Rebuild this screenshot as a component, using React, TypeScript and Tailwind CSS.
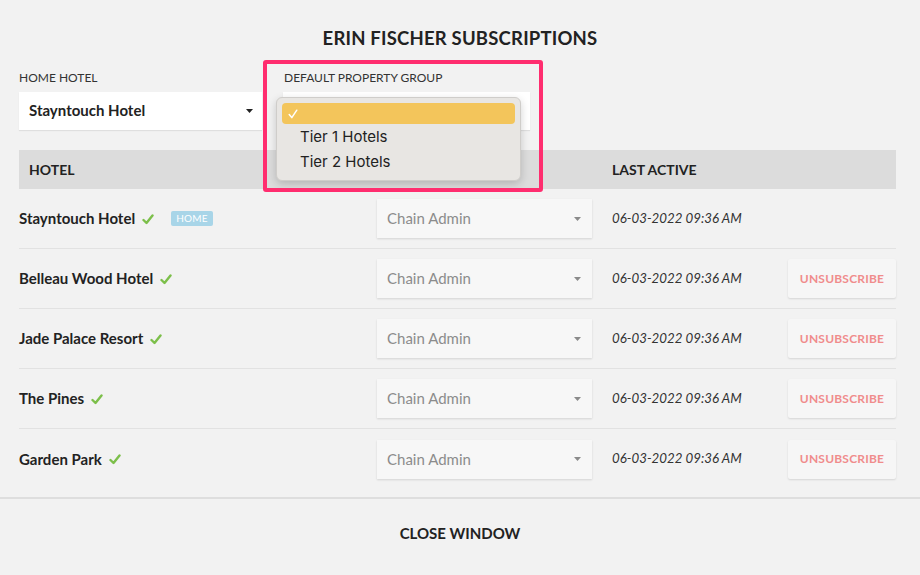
import React from "react";

const rows = [
  { name: "Stayntouch Hotel", home: true },
  { name: "Belleau Wood Hotel" },
  { name: "Jade Palace Resort" },
  { name: "The Pines" },
  { name: "Garden Park" },
];

function Check() {
  return (
    <svg width="12" height="11" viewBox="0 0 12 11" className="ml-[7px] mt-[1px]">
      <path d="M1.5 6 L4.5 9 L10.5 1.5" fill="none" stroke="#7cbf4a" strokeWidth="2.4" strokeLinecap="round" strokeLinejoin="round" />
    </svg>
  );
}

function Caret({ color }: { color: string }) {
  return (
    <svg width="7" height="4" viewBox="0 0 7 4">
      <path d="M0 0 L7 0 L3.5 4 Z" fill={color} />
    </svg>
  );
}

export default function App() {
  return (
    <div
      className="relative w-[920px] h-[575px] bg-[#f2f2f2] text-[#222] overflow-hidden"
      style={{ fontFamily: "Lato, 'Noto Sans', sans-serif" }}
    >
      <div className="pt-[27px] text-center text-[18.5px] leading-[22px] font-bold tracking-[0.2px]">
        ERIN FISCHER SUBSCRIPTIONS
      </div>

      <div className="pl-[19px] pr-[24px]">
        <div className="mt-[21px] flex gap-[21px]">
          <div className="w-[243px]">
            <div className="text-[12px] leading-[16px] text-[#333]">HOME HOTEL</div>
            <div className="mt-[6px] h-[38px] bg-white flex items-center justify-between pl-[10px] pr-[9px] shadow-[0_1px_1px_rgba(0,0,0,0.08)]">
              <span className="text-[15px] font-bold leading-[18px] -mt-[2px]">Stayntouch Hotel</span>
              <Caret color="#222" />
            </div>
          </div>
          <div className="w-[247px]">
            <div className="text-[12px] leading-[16px] text-[#333] pl-[1px]">DEFAULT PROPERTY GROUP</div>
            <div className="mt-[6px] h-[38px] bg-white shadow-[0_1px_1px_rgba(0,0,0,0.08)]"></div>
          </div>
        </div>

        <div className="mt-[20px] h-[39px] bg-[#dcdcdc] grid grid-cols-[358px_215px_196px_108px] items-center text-[14px] font-bold">
          <div className="pl-[10px]">HOTEL</div>
          <div></div>
          <div className="pl-[20px]">LAST ACTIVE</div>
          <div></div>
        </div>

        {rows.map((r, i) => (
          <div
            key={i}
            className={`h-[60px] grid grid-cols-[358px_215px_196px_108px] items-center ${i < rows.length - 1 ? "border-b border-[#e2e2e2]" : ""}`}
          >
            <div className="flex items-center">
              <span className="text-[15px] font-bold">{r.name}</span>
              <Check />
              {r.home && (
                <span className="ml-[17px] h-[15px] px-[5px] rounded-[2px] bg-[#a8d5e8] text-white text-[10px] leading-[15px] tracking-[0.2px]">
                  HOME
                </span>
              )}
            </div>
            <div className="h-[39px] bg-[#f7f7f7] shadow-[0_1px_2px_rgba(0,0,0,0.13)] flex items-center justify-between pl-[10px] pr-[11px]">
              <span className="text-[15px] text-[#8c8c8c]">Chain Admin</span>
              <Caret color="#8a8a8a" />
            </div>
            <div className="pl-[20px] italic text-[13.3px] text-[#333]">06-03-2022 09:36 AM</div>
            <div>
              {!r.home && (
                <div className="h-[39px] bg-[#f6f6f6] shadow-[0_1px_2px_rgba(0,0,0,0.12)] rounded-[2px] flex items-center justify-center text-[12px] font-bold text-[#f08c8c] tracking-[0.2px]">
                  UNSUBSCRIBE
                </div>
              )}
            </div>
          </div>
        ))}
      </div>

      <div className="mt-[8px] h-[2px] bg-[#dedede]"></div>
      <div className="pt-[24px] text-center text-[15px] font-bold leading-[20px]">CLOSE WINDOW</div>

      {/* dropdown menu overlay */}
      <div
        className="absolute left-[276px] top-[97px] w-[245px] h-[84px] bg-[#e8e6e3] rounded-[6px] border border-[#cfcdca] shadow-[0_3px_8px_rgba(0,0,0,0.18)] p-[5px]"
        style={{ fontFamily: "Inter, 'Liberation Sans', sans-serif" }}
      >
        <div className="h-[21px] rounded-[4px] bg-[#f3c55b] flex items-center pl-[6px]">
          <svg width="10" height="10" viewBox="0 0 10 10">
            <path d="M1.2 5.6 L3.8 8.6 L8.8 1.2" fill="none" stroke="white" strokeWidth="1.5" strokeLinecap="round" strokeLinejoin="round" />
          </svg>
        </div>
        <div className="h-[25px] flex items-center pl-[18px] text-[15px] text-[#222] mt-[1px]">Tier 1 Hotels</div>
        <div className="h-[25px] flex items-center pl-[18px] text-[15px] text-[#222]">Tier 2 Hotels</div>
      </div>

      {/* annotation box */}
      <div className="absolute left-[263px] top-[60px] w-[280px] h-[132px] border-[4px] border-[#ff2d6f] rounded-[3px]"></div>
    </div>
  );
}
